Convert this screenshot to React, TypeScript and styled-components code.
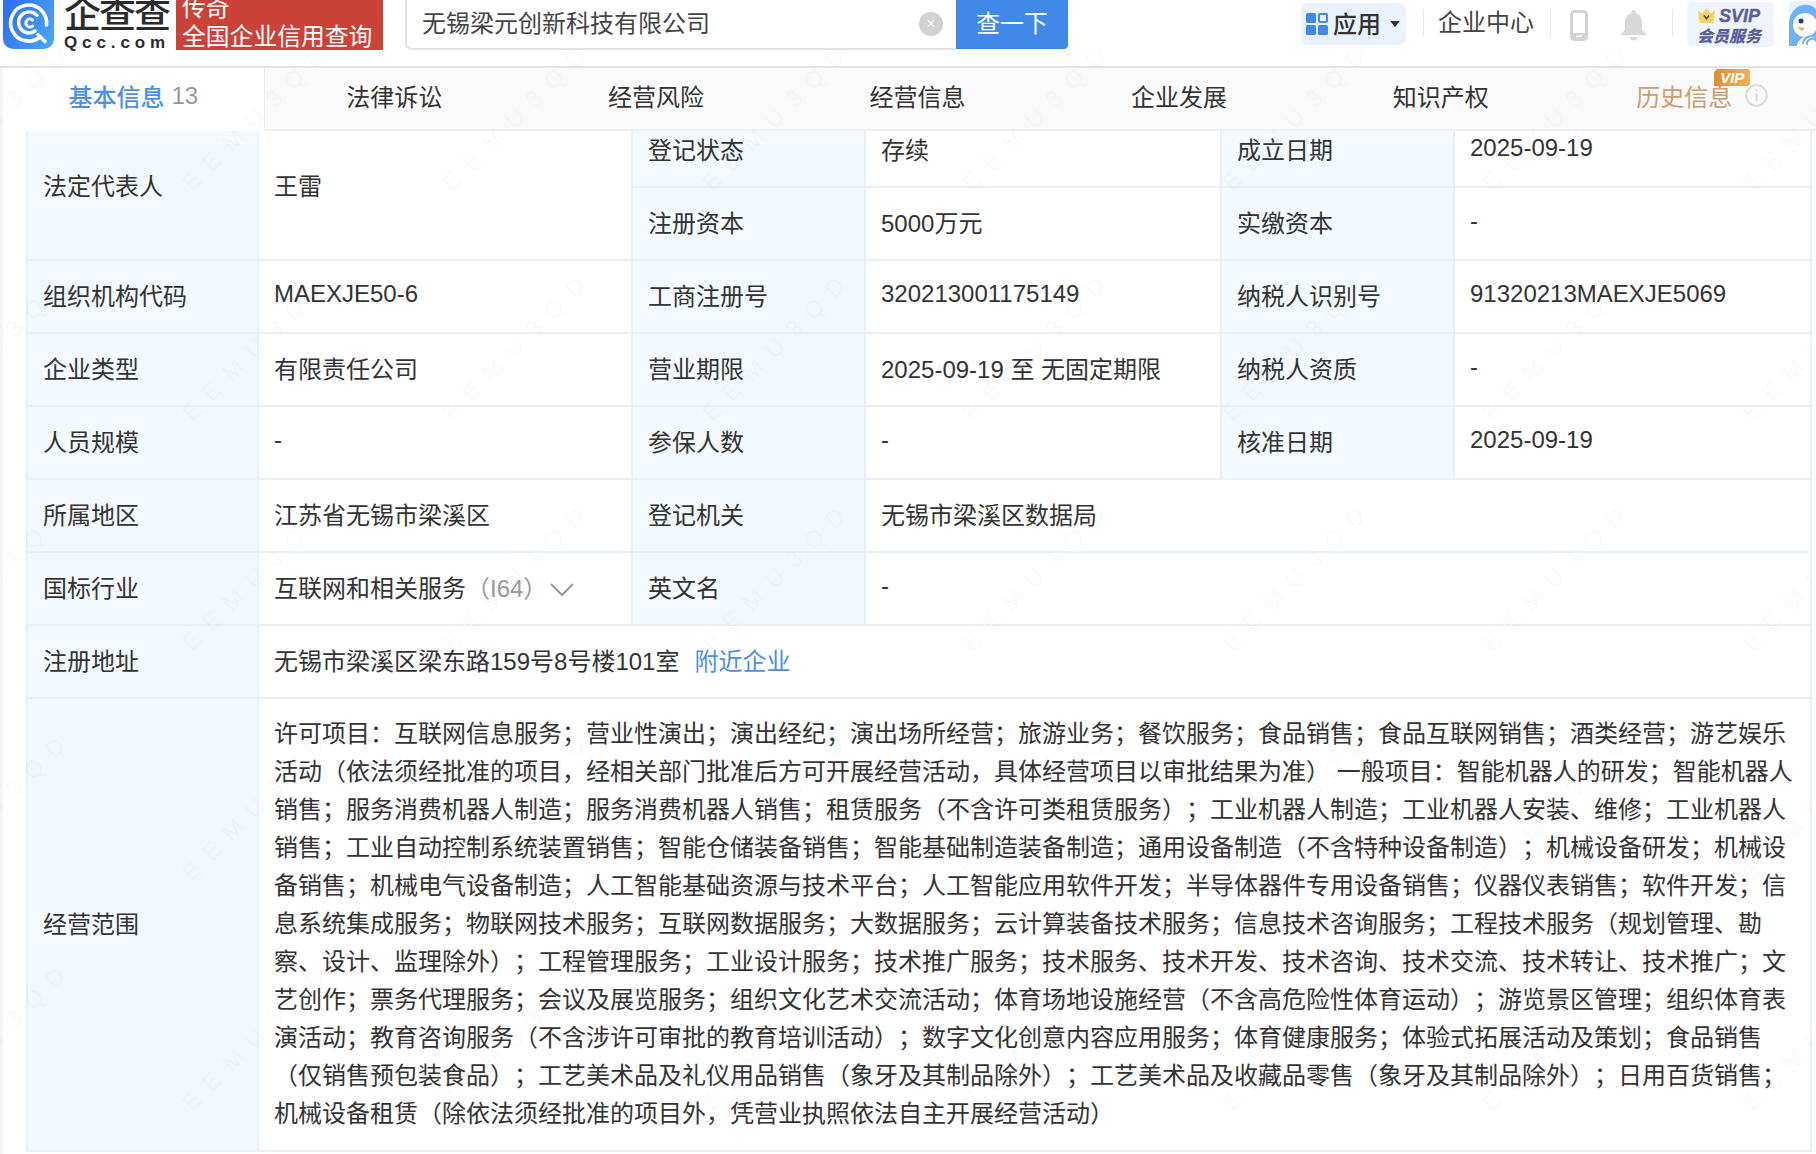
import React from "react";
import styled, { createGlobalStyle } from "styled-components";

const FONT = `"Liberation Sans", "Noto Sans CJK SC", sans-serif`;

const Global = createGlobalStyle`
  html, body { margin: 0; padding: 0; background: #f5f5f5; }
  body { font-family: ${FONT}; color: #333; text-spacing-trim: space-all; }
  * { box-sizing: border-box; }
`;

const Page = styled.div`
  position: relative;
  width: 1816px;
  height: 1154px;
  overflow: hidden;
  display: flex;
  flex-direction: column;
  font-size: 24px;
`;

const Header = styled.header`
  flex: none;
  height: 68px;
  background: #fff;
  border-bottom: 2px solid #e4e4e4;
  display: flex;
  align-items: flex-start;
  overflow: hidden;
`;

const LogoMark = styled.svg`
  flex: none;
  width: 51px;
  height: 49px;
  margin-left: 3px;
`;

const LogoWords = styled.div`
  flex: none;
  width: 114px;
  margin-left: 10px;
  color: #2b2b2b;
  display: flex;
  flex-direction: column;
`;

const LogoCn = styled.div`
  font-size: 37px;
  line-height: 33px;
  margin-top: -1px;
  font-weight: 500;
  letter-spacing: -2px;
  white-space: nowrap;
`;

const LogoEn = styled.div`
  font-size: 17px;
  line-height: 17px;
  margin-top: 2px;
  font-weight: 700;
  letter-spacing: 4.9px;
  white-space: nowrap;
`;

const Legend = styled.div`
  flex: none;
  width: 207px;
  height: 50px;
  margin-left: -2px;
  background: #cb4238;
  color: #fff;
  padding-left: 6px;
  font-size: 23.8px;
  line-height: 29px;
  overflow: hidden;
  white-space: nowrap;
  display: flex;
  flex-direction: column;
  justify-content: flex-end;
  > span { display: block; }
  > span:last-child { margin-bottom: -1px; }
`;

const SearchBox = styled.div`
  flex: none;
  width: 551px;
  height: 50px;
  margin-left: 22px;
  border: 2px solid #e2e2e2;
  border-top: none;
  border-right: none;
  border-bottom-left-radius: 7px;
  display: flex;
  align-items: center;
  padding: 0 13px 6px 15px;
  justify-content: space-between;
  color: #444;
  white-space: nowrap;
`;

const ClearDot = styled.span`
  flex: none;
  width: 24px;
  height: 24px;
  margin-top: 6px;
  border-radius: 50%;
  background: #d2d2d2;
  color: #fff;
  font-size: 16px;
  line-height: 23px;
  text-align: center;
`;

const SearchBtn = styled.div`
  flex: none;
  width: 112px;
  height: 49px;
  background: #4189e8;
  border-bottom-right-radius: 4px;
  color: #fff;
  text-align: center;
  line-height: 47px;
  font-size: 23.8px;
`;

const AppPill = styled.div`
  flex: none;
  width: 105px;
  height: 42px;
  margin: 3px 0 0 233px;
  background: #e9f2fe;
  border-radius: 8px;
  display: flex;
  align-items: center;
  padding-left: 5px;
  gap: 5px;
  font-weight: 500;
  color: #333;
  > span:nth-child(2) { margin-top: -3px; }
`;

const Caret = styled.span`
  width: 0;
  height: 0;
  margin-left: 4px;
  border-left: 5.5px solid transparent;
  border-right: 5.5px solid transparent;
  border-top: 6px solid #333;
`;

const Divider = styled.span`
  flex: none;
  width: 1px;
  height: 27px;
  margin-top: 9px;
  background: #e6e6e6;
`;

const HeadLink = styled.span`
  flex: none;
  margin-top: 7px;
  line-height: 32px;
  color: #444;
  white-space: nowrap;
`;

const HeadIcon = styled.svg`
  flex: none;
  margin-top: 10px;
`;

const SvipBox = styled.div`
  flex: none;
  width: 87px;
  height: 45px;
  margin: 2px 0 0 14px;
  background: #f2f4fd;
  border-radius: 6px;
  display: flex;
  flex-direction: column;
  align-items: center;
  color: #5b5f97;
  font-style: italic;
  font-weight: 700;
`;

const SvipTop = styled.div`
  display: flex;
  align-items: center;
  gap: 4px;
  font-size: 18px;
  line-height: 22px;
  height: 23px;
  margin: 2px 3px 0 0;
  -webkit-text-stroke: 0.4px #5b5f97;
`;

const SvipBottom = styled.div`
  font-size: 16px;
  line-height: 19px;
  white-space: nowrap;
  margin-right: 3px;
  font-weight: 900;
`;

const Avatar = styled.svg`
  flex: none;
  width: 28px;
  height: 45px;
  margin: 1px 0 0 15px;
`;

const TabBar = styled.nav`
  position: relative;
  z-index: 2;
  flex: none;
  height: 63px;
  margin-left: 3px;
  background: #fafafa;
  display: flex;
  overflow: hidden;
`;

const Tab = styled.div<{ $active?: boolean }>`
  flex: none;
  width: ${(p) => (p.$active ? "260.5px" : "261.6px")};
  height: 63px;
  background: ${(p) => (p.$active ? "#fff" : "transparent")};
  border-bottom: ${(p) => (p.$active ? "none" : "2px solid #f0f0f0")};
  box-shadow: ${(p) => (p.$active ? "1px 0 0 #ececec" : "none")};
  display: flex;
  align-items: center;
  justify-content: center;
  gap: 7px;
  color: ${(p) => (p.$active ? "#4a90e8" : "#333")};
  font-weight: ${(p) => (p.$active ? 500 : 400)};
  white-space: nowrap;
  padding-bottom: ${(p) => (p.$active ? "8px" : "7px")};
`;

const TabCount = styled.span`
  color: #999;
  font-weight: 400;
`;

const HistoryLabel = styled.span`
  position: relative;
  color: #c9a06e;
`;

const VipBadge = styled.span`
  position: absolute;
  right: -18px;
  top: -9px;
  width: 36px;
  height: 17px;
  background: linear-gradient(100deg, #d98e2e, #f0b35a);
  border-radius: 5px 3px 3px 0;
  color: #fff;
  font-size: 15px;
  line-height: 17px;
  font-weight: 700;
  font-style: italic;
  text-align: center;
`;

const Main = styled.main`
  flex: 1;
  min-height: 0;
  margin-left: 3px;
  background: #fff;
  padding-left: 23px;
  overflow: hidden;
`;

const Table = styled.table`
  width: 1784px;
  margin-top: -18px;
  border-collapse: collapse;
  table-layout: fixed;
`;

const Th = styled.td`
  height: 73px;
  padding: 0 15px 5px;
  background: #f4f9fd;
  border: 2px solid #e9f0f7;
  color: #333;
  white-space: nowrap;
`;

const Td = styled.td`
  height: 73px;
  padding: 0 15px 5px;
  background: #fff;
  border: 2px solid #e9f0f7;
  color: #333;
  white-space: nowrap;
`;

const ScopeCell = styled.td`
  padding: 16px 14px 17px 15px;
  background: #fff;
  border: 2px solid #e9f0f7;
  line-height: 38px;
  color: #333;
`;

const Grey = styled.span`
  color: #999;
`;

const Chevron = styled.svg`
  vertical-align: middle;
  margin: 0 0 2px 2px;
`;

const LinkText = styled.span`
  color: #4a90e8;
  margin-left: 15px;
`;

const Watermark = styled.div`
  position: absolute;
  inset: 0;
  z-index: 3;
  pointer-events: none;
  overflow: hidden;
  display: grid;
  grid-template-columns: repeat(8, 260px);
  grid-auto-rows: 230px;
  justify-content: center;
`;

const WatermarkText = styled.span`
  display: flex;
  align-items: center;
  justify-content: center;
  transform: rotate(-45deg);
  color: rgba(170, 180, 190, 0.08);
  font-size: 24px;
  letter-spacing: 12px;
  white-space: nowrap;
`;

const SCOPE =
  "许可项目：互联网信息服务；营业性演出；演出经纪；演出场所经营；旅游业务；餐饮服务；食品销售；食品互联网销售；酒类经营；游艺娱乐活动（依法须经批准的项目，经相关部门批准后方可开展经营活动，具体经营项目以审批结果为准） 一般项目：智能机器人的研发；智能机器人销售；服务消费机器人制造；服务消费机器人销售；租赁服务（不含许可类租赁服务）；工业机器人制造；工业机器人安装、维修；工业机器人销售；工业自动控制系统装置销售；智能仓储装备销售；智能基础制造装备制造；通用设备制造（不含特种设备制造）；机械设备研发；机械设备销售；机械电气设备制造；人工智能基础资源与技术平台；人工智能应用软件开发；半导体器件专用设备销售；仪器仪表销售；软件开发；信息系统集成服务；物联网技术服务；互联网数据服务；大数据服务；云计算装备技术服务；信息技术咨询服务；工程技术服务（规划管理、勘察、设计、监理除外）；工程管理服务；工业设计服务；技术推广服务；技术服务、技术开发、技术咨询、技术交流、技术转让、技术推广；文艺创作；票务代理服务；会议及展览服务；组织文化艺术交流活动；体育场地设施经营（不含高危险性体育运动）；游览景区管理；组织体育表演活动；教育咨询服务（不含涉许可审批的教育培训活动）；数字文化创意内容应用服务；体育健康服务；体验式拓展活动及策划；食品销售（仅销售预包装食品）；工艺美术品及礼仪用品销售（象牙及其制品除外）；工艺美术品及收藏品零售（象牙及其制品除外）；日用百货销售；机械设备租赁（除依法须经批准的项目外，凭营业执照依法自主开展经营活动）";

const TABS = ["法律诉讼", "经营风险", "经营信息", "企业发展", "知识产权"];
const COLS = [231, 374, 233, 356, 233, 357];

export default function App() {
  return (
    <Page>
      <Global />
      <Header>
        <LogoMark viewBox="0 0 51 49">
          <defs>
            <linearGradient id="lg" x1="0" x2="1" y1="0.2" y2="0.8">
              <stop offset="0" stopColor="#2a6df0" />
              <stop offset="1" stopColor="#4aa3f8" />
            </linearGradient>
          </defs>
          <path d="M0 -9h51v48a10 10 0 0 1-10 10H10A10 10 0 0 1 0 39z" fill="url(#lg)" />
          <g fill="none" stroke="#fff" strokeLinecap="round">
            <path d="M37 37A18 18 0 1 1 43.5 25" strokeWidth="3.6" />
            <path d="M32 31A10.5 10.5 0 1 1 34 15.5" strokeWidth="3.4" />
            <path d="M29.5 20A4 4 0 1 0 29.5 26" strokeWidth="3" />
            <path d="M35 34.5l7 7" strokeWidth="3.4" />
          </g>
        </LogoMark>
        <LogoWords>
          <LogoCn>企查查</LogoCn>
          <LogoEn>Qcc.com</LogoEn>
        </LogoWords>
        <Legend>
          <span>传奇</span>
          <span>全国企业信用查询</span>
        </Legend>
        <SearchBox>
          <span>无锡梁元创新科技有限公司</span>
          <ClearDot>×</ClearDot>
        </SearchBox>
        <SearchBtn>查一下</SearchBtn>
        <AppPill>
          <svg width="22" height="22" viewBox="0 0 22 22">
            <rect x="0" y="0" width="10" height="10" rx="1.5" fill="#3f8ae8" />
            <rect x="13" y="1" width="8" height="8" rx="1" fill="#e9f2fe" stroke="#3f8ae8" strokeWidth="2" />
            <rect x="0" y="12" width="10" height="10" rx="1.5" fill="#3f8ae8" />
            <rect x="12" y="12" width="10" height="10" rx="1.5" fill="#3f8ae8" />
          </svg>
          <span>应用</span>
          <Caret />
        </AppPill>
        <Divider style={{ marginLeft: 17 }} />
        <HeadLink style={{ marginLeft: 14 }}>企业中心</HeadLink>
        <Divider style={{ marginLeft: 16 }} />
        <HeadIcon width="18" height="31" viewBox="0 0 18 31" style={{ marginLeft: 19 }}>
          <rect x="1.5" y="1.5" width="15" height="28" rx="3" fill="#fff" stroke="#d2d2d2" strokeWidth="3" />
          <rect x="1" y="23" width="16" height="7" rx="2" fill="#d2d2d2" />
          <rect x="6" y="25.5" width="6" height="1.6" fill="#fff" />
        </HeadIcon>
        <HeadIcon width="25" height="31" viewBox="0 0 25 31" style={{ marginLeft: 33 }}>
          <path d="M12.5 0a2 2 0 0 1 2 2v1.2C19 4.3 21 8 21 12.5V20l4 4v1H0v-1l4-4v-7.5C4 8 6 4.3 10.5 3.2V2a2 2 0 0 1 2-2z" fill="#d8d8d8" />
          <path d="M9 27h7a3.5 3.5 0 0 1-7 0z" fill="#d8d8d8" />
        </HeadIcon>
        <Divider style={{ marginLeft: 26 }} />
        <SvipBox>
          <SvipTop>
            <svg width="17" height="15" viewBox="0 0 16 14">
              <path d="M0 2l4 3 4-5 4 5 4-3-1.5 12h-13z" fill="#f6d365" />
              <path d="M5.5 7l2.5 3 2.5-3" fill="none" stroke="#6b4a10" strokeWidth="1.5" />
            </svg>
            <span>SVIP</span>
          </SvipTop>
          <SvipBottom>会员服务</SvipBottom>
        </SvipBox>
        <Avatar viewBox="0 0 28 45">
          <rect width="40" height="46" rx="6" fill="#e6f1fe" />
          <path d="M0 34C-2 20 2 6 14 4c9-1 14 4 14 8v33H0z" fill="#6fb2f5" />
          <ellipse cx="16" cy="24" rx="12" ry="12" fill="#fff" />
          <circle cx="12" cy="20" r="2.5" fill="#1f3f6e" />
          <path d="M8 26l8 1-3 3z" fill="#f5a54a" />
          <path d="M8 45a14 10 0 0 1 20-9v9z" fill="#fff" />
          <path d="M14 43a8 8 0 0 1 14-5M18 44a5 5 0 0 1 10-2" fill="none" stroke="#6fb2f5" strokeWidth="2" />
        </Avatar>
      </Header>

      <TabBar>
        <Tab $active>
          <span>基本信息</span>
          <TabCount>13</TabCount>
        </Tab>
        {TABS.map((t) => (
          <Tab key={t}>{t}</Tab>
        ))}
        <Tab style={{ gap: 13 }}>
          <HistoryLabel>
            历史信息
            <VipBadge>VIP</VipBadge>
          </HistoryLabel>
          <svg width="23" height="23" viewBox="0 0 23 23">
            <circle cx="11.5" cy="11.5" r="10.3" fill="none" stroke="#dcdcdc" strokeWidth="2" />
            <rect x="10.5" y="9.5" width="2" height="8" fill="#dcdcdc" />
            <rect x="10.5" y="5.5" width="2" height="2" fill="#dcdcdc" />
          </svg>
        </Tab>
      </TabBar>

      <Main>
        <Table>
          <colgroup>
            {COLS.map((w, i) => (
              <col key={i} style={{ width: w }} />
            ))}
          </colgroup>
          <tbody>
            <tr>
              <Th rowSpan={2}>法定代表人</Th>
              <Td rowSpan={2}>王雷</Td>
              <Th>登记状态</Th>
              <Td>存续</Td>
              <Th>成立日期</Th>
              <Td>2025-09-19</Td>
            </tr>
            <tr>
              <Th>注册资本</Th>
              <Td>5000万元</Td>
              <Th>实缴资本</Th>
              <Td>-</Td>
            </tr>
            <tr>
              <Th>组织机构代码</Th>
              <Td>MAEXJE50-6</Td>
              <Th>工商注册号</Th>
              <Td>320213001175149</Td>
              <Th>纳税人识别号</Th>
              <Td>91320213MAEXJE5069</Td>
            </tr>
            <tr>
              <Th>企业类型</Th>
              <Td>有限责任公司</Td>
              <Th>营业期限</Th>
              <Td>2025-09-19 至 无固定期限</Td>
              <Th>纳税人资质</Th>
              <Td>-</Td>
            </tr>
            <tr>
              <Th>人员规模</Th>
              <Td>-</Td>
              <Th>参保人数</Th>
              <Td>-</Td>
              <Th>核准日期</Th>
              <Td>2025-09-19</Td>
            </tr>
            <tr>
              <Th>所属地区</Th>
              <Td>江苏省无锡市梁溪区</Td>
              <Th>登记机关</Th>
              <Td colSpan={3}>无锡市梁溪区数据局</Td>
            </tr>
            <tr>
              <Th>国标行业</Th>
              <Td>
                互联网和相关服务<Grey>（I64）</Grey>
                <Chevron width="26" height="15" viewBox="0 0 26 15">
                  <path d="M2 2l11 11L24 2" fill="none" stroke="#999" strokeWidth="2" />
                </Chevron>
              </Td>
              <Th>英文名</Th>
              <Td colSpan={3}>-</Td>
            </tr>
            <tr>
              <Th>注册地址</Th>
              <Td colSpan={5}>
                无锡市梁溪区梁东路159号8号楼101室
                <LinkText>附近企业</LinkText>
              </Td>
            </tr>
            <tr>
              <Th>经营范围</Th>
              <ScopeCell colSpan={5}>{SCOPE}</ScopeCell>
            </tr>
          </tbody>
        </Table>
      </Main>

      <Watermark>
        {Array.from({ length: 48 }).map((_, i) => (
          <WatermarkText key={i}>EEMU3QD</WatermarkText>
        ))}
      </Watermark>
    </Page>
  );
}
